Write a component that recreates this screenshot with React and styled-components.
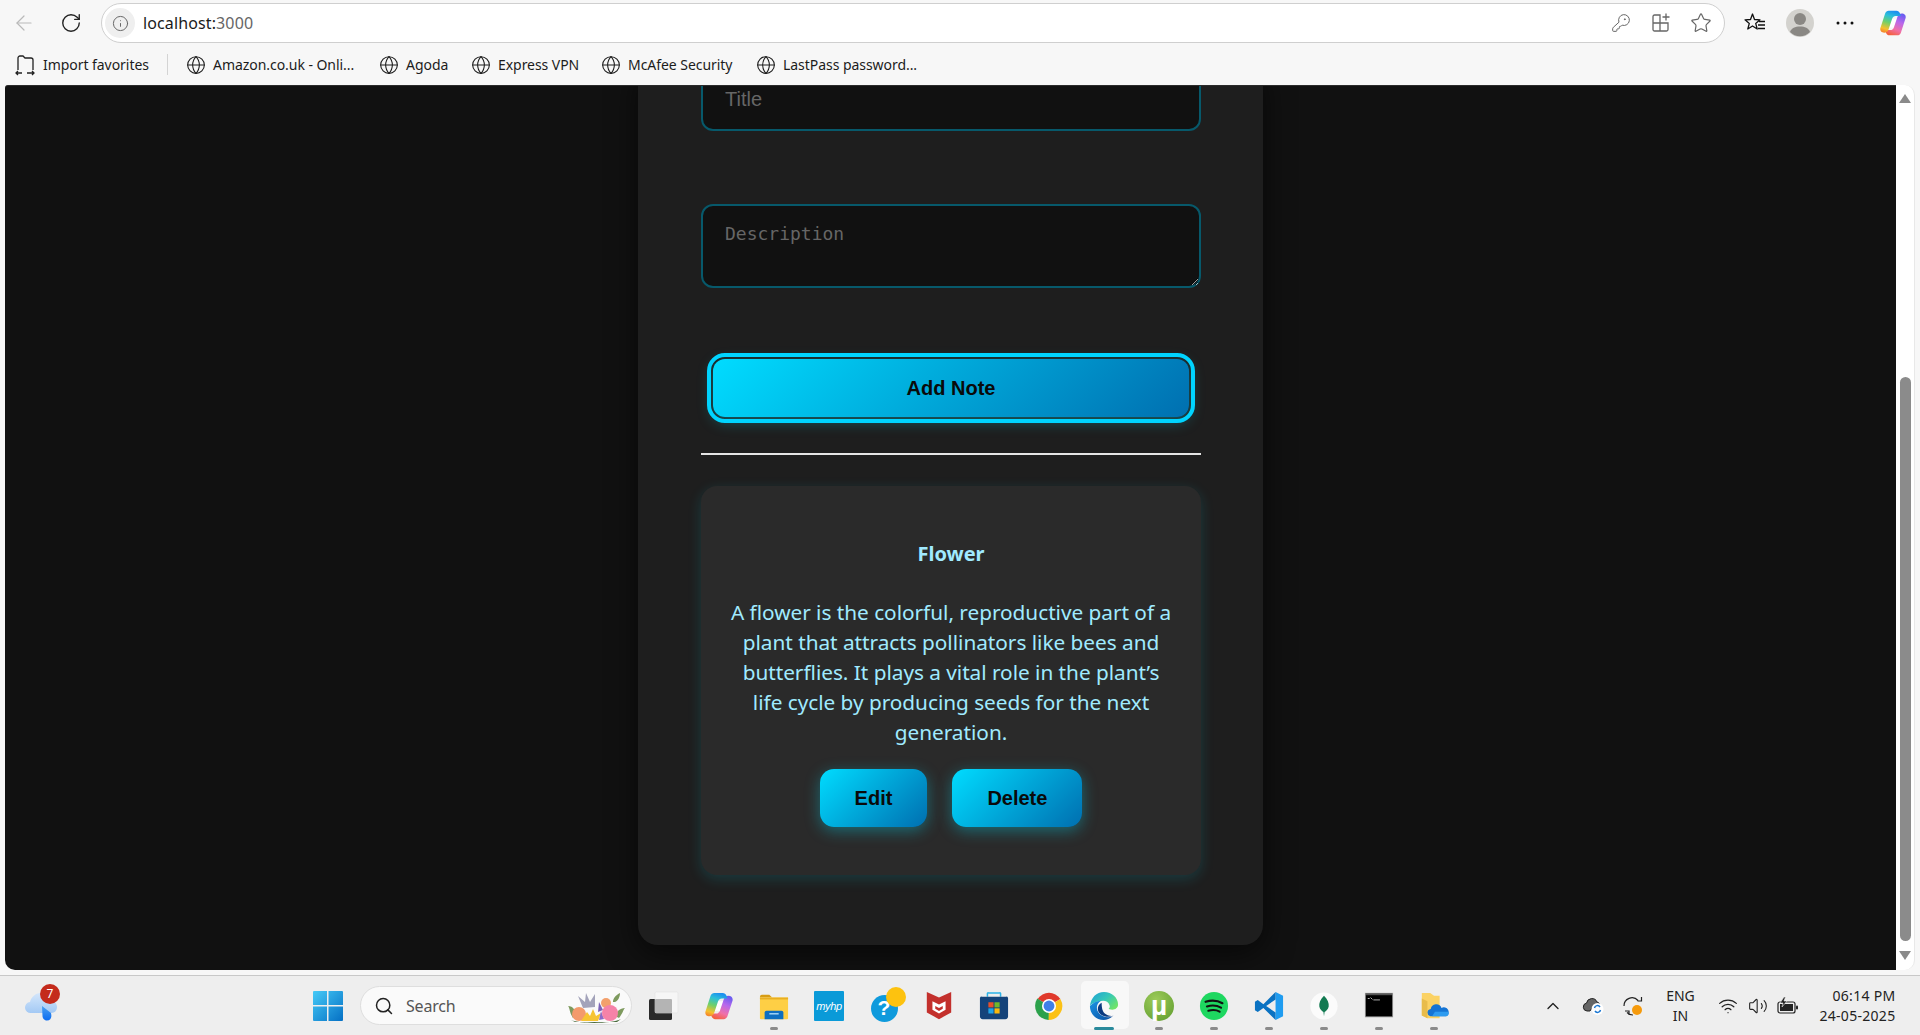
import styled, { createGlobalStyle } from 'styled-components';
import { ArrowLeft, RotateCw, KeyRound, Star, Globe, Search, ChevronUp, Wifi, Volume2, Info } from 'lucide-react';

const Global = createGlobalStyle`
  html, body { margin: 0; padding: 0; height: 100%; overflow: hidden; }
  body { font-family: 'Noto Sans', 'Open Sans', sans-serif; background: #f7f7f7; }
  * { box-sizing: border-box; }
`;

const Window = styled.div`
  width: 1920px;
  height: 1035px;
  display: flex;
  flex-direction: column;
  background: #f7f7f7;
`;

/* browser chrome */
const Toolbar = styled.div`
  height: 44px;
  padding-top: 3px;
  display: flex;
  align-items: flex-start;
`;
const NavBtn = styled.div`
  width: ${p => p.$w || 46}px;
  height: 40px;
  margin-left: ${p => p.$ml || 0}px;
  display: flex;
  align-items: center;
  justify-content: center;
  flex-shrink: 0;
  color: ${p => p.$color || '#222'};
`;
const AddressBar = styled.div`
  width: 1624px;
  height: 40px;
  margin-left: 8px;
  flex-shrink: 0;
  background: #fff;
  border: 1px solid #cfcfcf;
  border-radius: 20px;
  display: flex;
  align-items: center;
  padding: 0 3px 0 3px;
`;
const SiteInfo = styled.div`
  width: 30px;
  height: 30px;
  border-radius: 50%;
  background: #efefef;
  display: flex;
  align-items: center;
  justify-content: center;
  color: #666;
`;
const Url = styled.div`
  margin-left: 8px;
  font-size: 16px;
  letter-spacing: 0.12px;
  color: #1a1a1a;
  flex: 1;
  span { color: #666; }
`;
const AddressIcon = styled.div`
  width: 40px;
  display: flex;
  justify-content: center;
  color: #666;
`;
const Bookmarks = styled.div`
  height: 41px;
  display: flex;
  align-items: center;
  padding: 0 0 0 14px;
  font-size: 14px;
  letter-spacing: -0.05px;
  color: #1c1c1c;
`;
const Bookmark = styled.div`
  display: flex;
  align-items: center;
  gap: 7px;
  width: ${p => p.$w}px;
  flex-shrink: 0;
  white-space: nowrap;
`;
const BarSep = styled.div`
  width: 1px;
  height: 21px;
  background: #d4d4d4;
  margin-right: 18px;
`;

/* page viewport */
const Middle = styled.div`
  height: 885px;
  margin: 0 5px 5px;
  display: flex;
`;
const Viewport = styled.div`
  flex: 1;
  background: #111;
  border-radius: 3px 0 0 10px;
  border-top: 1px solid #2b2b2b;
  overflow: hidden;
`;
const Scrollbar = styled.div`
  width: 19px;
  background: #fff;
  border-radius: 0 10px 10px 0;
  border-right: 1px solid #e8e8e8;
  display: flex;
  flex-direction: column;
  align-items: center;
  padding: 9px 0 9px;
`;
const ScrollArrow = styled.div`
  width: 0;
  height: 0;
  border-left: 6px solid transparent;
  border-right: 6px solid transparent;
  ${p => (p.$down ? 'border-top: 9px solid #8a8a8a;' : 'border-bottom: 9px solid #8a8a8a;')}
`;
const ScrollThumb = styled.div`
  width: 11px;
  height: 564px;
  background: #8b8b8b;
  border-radius: 6px;
  margin: 274px 0 10px;
`;

const Panel = styled.div`
  width: 625px;
  margin: -17px auto 0;
  padding: 0 62px 70px 63px;
  background: #1e1e1e;
  border-radius: 0 0 20px 20px;
  box-shadow: 0 8px 30px rgba(0, 0, 0, 0.6);
`;
const Form = styled.form`
  display: flex;
  flex-direction: column;
  gap: 73px;
  padding-bottom: 36px;
  border-bottom: 2px solid #e4e4e4;
`;
const fieldStyles = `
  width: 100%;
  background: #111;
  border: 2px solid #07596b;
  border-radius: 12px;
  padding: 0 22px;
  color: #fff;
  outline: none;
  display: block;
  &::placeholder { color: #666; opacity: 1; }
`;
const TitleInput = styled.input`
  ${fieldStyles}
  height: 62px;
  padding-bottom: 2px;
  font: 20px 'Liberation Sans', Arial, sans-serif;
`;
const DescInput = styled.textarea`
  ${fieldStyles}
  height: 84px;
  padding-top: 18px;
  font: 18px/20px 'DejaVu Sans Mono', monospace;
`;
const GlowButton = styled.button`
  border: 0;
  background: linear-gradient(135deg, #00dcff, #006fb0);
  color: #0a0a0a;
  font: bold 20px 'Liberation Sans', Arial, sans-serif;
  box-shadow: 0 4px 15px rgba(0, 229, 255, 0.35);
`;
const AddButton = styled(GlowButton)`
  height: 58px;
  margin: -2px 12px 0;
  border-radius: 12px;
  outline: 4px solid #00d4ff;
  outline-offset: 2px;
`;
const Card = styled.div`
  margin-top: 31px;
  padding: 54px 27px 48px;
  background: #2a2a2a;
  border-radius: 16px;
  text-align: center;
  color: #a0eaff;
  box-shadow: 0 4px 14px rgba(0, 229, 255, 0.15);
`;
const CardTitle = styled.h3`
  margin: 0 0 30px;
  font-size: 20px;
  line-height: 27px;
  font-weight: 700;
`;
const CardText = styled.p`
  margin: 0 0 22px;
  font-size: 20.8px;
  line-height: 30px;
  letter-spacing: -0.03px;
`;
const CardActions = styled.div`
  display: flex;
  justify-content: center;
  gap: 25px;
`;
const SmallButton = styled(GlowButton)`
  height: 58px;
  padding: 0 35px;
  border-radius: 14px;
`;

/* taskbar */
const Taskbar = styled.div`
  height: 60px;
  background: #eeeeee;
  border-top: 1px solid #c8c8c8;
  display: flex;
  align-items: center;
  & > * { flex-shrink: 0; }
`;
const Weather = styled.div`
  position: relative;
  width: 46px;
  margin-left: 18px;
  height: 40px;
  display: flex;
  align-items: center;
  justify-content: center;
`;
const CountBadge = styled.div`
  position: absolute;
  top: -2px;
  left: 22px;
  width: 20px;
  height: 20px;
  border-radius: 50%;
  background: #c42b1c;
  color: #fff;
  font-size: 12px;
  display: flex;
  align-items: center;
  justify-content: center;
`;
const StartBtn = styled.div`
  margin-left: 249px;
  width: 30px;
  display: flex;
`;
const SearchBox = styled.div`
  margin-left: 17px;
  width: 272px;
  height: 39px;
  background: #fafafa;
  border: 1px solid #dedede;
  border-radius: 20px;
  display: flex;
  align-items: center;
  padding: 0 4px 0 13px;
  gap: 12px;
  font-size: 16px;
  letter-spacing: -0.2px;
  color: #555;
`;
const SearchLabel = styled.span`
  flex: 1;
`;
const AppStrip = styled.div`
  margin-left: 4.5px;
  display: flex;
`;
const AppCell = styled.div`
  position: relative;
  width: 55px;
  height: 59px;
  display: flex;
  align-items: center;
  justify-content: center;
`;
const ActiveBg = styled.div`
  position: absolute;
  top: 5px;
  left: 4px;
  width: 48px;
  height: 48px;
  background: #f8f8f8;
  border-radius: 5px;
`;
const RunDot = styled.div`
  position: absolute;
  bottom: 5px;
  left: 50%;
  transform: translateX(-50%);
  width: ${p => (p.$active ? 20 : 8)}px;
  height: 3px;
  border-radius: 2px;
  background: ${p => (p.$active ? '#2a8a9c' : '#8a8a8a')};
`;
const AppIcon = styled.div`
  position: relative;
  display: flex;
`;
const Tray = styled.div`
  margin-left: 71px;
  display: flex;
  align-items: center;
  color: #222;
`;
const TrayItem = styled.div`
  width: ${p => p.$w || 40}px;
  margin-left: ${p => p.$ml || 0}px;
  display: flex;
  justify-content: center;
  flex-shrink: 0;
`;
const TwoLine = styled.div`
  font-size: 14px;
  line-height: 20px;
  text-align: ${p => p.$align || 'center'};
  width: ${p => p.$w}px;
  margin-left: ${p => p.$ml || 0}px;
  color: #222;
  white-space: nowrap;
  letter-spacing: ${p => p.$ls || 0}px;
`;

/* drawn icons */
const S = ({ size = 30, children, vb = 32 }) => (
  <svg width={size} height={size} viewBox={`0 0 ${vb} ${vb}`} fill="none">{children}</svg>
);

const ExtIcon = () => (
  <svg width="22" height="22" viewBox="0 0 22 22" fill="none" stroke="#666" strokeWidth="1.3">
    <path d="M3 4.500A1.500 1.500 0 0 1 4.500 3H10v8H3zM3 11h7v8H4.500A1.500 1.500 0 0 1 3 17.500zM10 11h8v6.500a1.500 1.500 0 0 1-1.500 1.500H10z" />
    <path d="M16 1.500v7M12.500 5h7" />
  </svg>
);
const FavList = () => (
  <svg width="24" height="24" viewBox="0 0 24 24" fill="none" stroke="#111" strokeWidth="1.300" strokeLinejoin="round">
    <path d="M9.500 3l2 5.500 5.500.3-4.300 3.600 1.500 5.600-4.700-3-4.700 3 1.500-5.600L2 8.800l5.500-.3z" />
    <path d="M16 10.500h6M15 14h7M15 17.500h7" />
  </svg>
);
const Avatar = () => (
  <svg width="28" height="28" viewBox="0 0 28 28">
    <circle cx="14" cy="14" r="14" fill="#d3d2ce" />
    <circle cx="14" cy="10" r="6" fill="#8a8884" />
    <path d="M4 23c1.500-4 5-5.500 10-5.500S22.500 19 24 23a14 14 0 0 1-20 0z" fill="#8a8884" />
  </svg>
);
const Dots = () => (
  <svg width="18" height="4" viewBox="0 0 18 4" fill="#111">
    <circle cx="2" cy="2" r="1.500" /><circle cx="9" cy="2" r="1.500" /><circle cx="16" cy="2" r="1.500" />
  </svg>
);
const Copilot = ({ id, size = 30 }) => (
  <S size={size}>
    <defs>
      <linearGradient id={id + 'a'} x1="0.6" y1="0" x2="0.3" y2="1">
        <stop offset="0" stopColor="#1c8ff0" /><stop offset=".25" stopColor="#2bc0d8" /><stop offset=".55" stopColor="#6fd06a" /><stop offset=".85" stopColor="#f6c02c" /><stop offset="1" stopColor="#f58a2c" />
      </linearGradient>
      <linearGradient id={id + 'b'} x1="0.7" y1="0" x2="0.3" y2="1">
        <stop offset="0" stopColor="#6a5cf0" /><stop offset=".35" stopColor="#b868ec" /><stop offset=".7" stopColor="#f070a8" /><stop offset="1" stopColor="#f4603c" />
      </linearGradient>
    </defs>
    <path d="M15 11H21L17 21H11Z" fill="#fff" />
    <path d="M21 30H12C10 30 9 29 8 27L7 24H13C15 24 16 23 17 21L21 9C22 6 24 5 26 5C29 5 31 7 30.500 10L25 27C24 29 23 30 21 30Z" fill={`url(#${id}b)`} />
    <path d="M11 2H20C22 2 23 3 24 5L25 8H19C17 8 16 9 15 11L11 23C10 26 8 27 6 27C3 27 1 25 1.500 22L7 5C8 3 9 2 11 2Z" fill={`url(#${id}a)`} />
  </S>
);
const ImportFav = () => (
  <svg width="22" height="22" viewBox="0 0 22 22" fill="none" stroke="#222" strokeWidth="1.300">
    <path d="M4 16V4a2 2 0 0 1 2-2h3l2 2h6a2 2 0 0 1 2 2v10" />
    <path d="M8 19H2M4 17l-2 2 2 2M13 19h7M18 17l2 2-2 2" />
  </svg>
);
const Battery = () => (
  <svg width="22" height="18" viewBox="0 0 22 18" fill="none">
    <rect x="1" y="5" width="17" height="11" rx="2" stroke="#222" strokeWidth="1.200" />
    <rect x="3" y="7" width="13" height="7" fill="#222" />
    <rect x="19" y="8.500" width="2" height="4" rx="1" fill="#222" />
    <path d="M7 0L3 6h3l-1 4 5-6H7l1.500-4z" fill="#222" stroke="#eee" strokeWidth=".6" />
  </svg>
);
const CloudSync = () => (
  <svg width="22" height="20" viewBox="0 0 22 20" fill="none">
    <path d="M5 15a4 4 0 0 1-.5-7.900A5.500 5.500 0 0 1 15 6a4 4 0 0 1 3 3H12l-4 6z" fill="#666" stroke="#222" strokeWidth="1" />
    <circle cx="15.500" cy="13" r="6" fill="#fff" />
    <path d="M12.500 12a3 3 0 0 1 5.500-1M18.500 14a3 3 0 0 1-5.500 1" stroke="#1976d2" strokeWidth="1.500" />
  </svg>
);
const SyncDot = () => (
  <svg width="22" height="22" viewBox="0 0 22 22" fill="none" stroke="#222" strokeWidth="1.200">
    <path d="M2 11a8 8 0 0 1 14-5.500M19.500 2v4h-4M3 16h4v4M5 17.500a8 8 0 0 0 6 2.500" />
    <circle cx="15" cy="15" r="5" fill="#f59a0c" stroke="none" />
  </svg>
);
const StartLogo = () => (
  <svg width="30" height="30" viewBox="0 0 30 30">
    <defs>
      <linearGradient id="win" x1="0" y1="0" x2="1" y2="1">
        <stop offset="0" stopColor="#45caf7" /><stop offset="1" stopColor="#0570c4" />
      </linearGradient>
    </defs>
    <path d="M0 1a1 1 0 0 1 1-1h13v14H0zM15.500 0H29a1 1 0 0 1 1 1v13H15.500zM0 15.500h14V30H1a1 1 0 0 1-1-1zM15.500 15.500H30V29a1 1 0 0 1-1 1H15.500z" fill="url(#win)" />
  </svg>
);
const Bouquet = () => (
  <svg width="62" height="36" viewBox="0 0 62 36">
    <path d="M8 30C4 24 5 20 3 18c5 0 8 5 10 10zM54 30c4-5 4-8 6-10-5 0-9 4-10 8zM50 14c3-1 5-5 5-9-4 2-7 5-7 9z" fill="#7e9a5e" />
    <path d="M18 20l-5-12 7 6 1-9 4 9 5-8 0 13z" fill="#a3a3ba" />
    <path d="M33 24l1-10 4 8z" fill="#7a62b8" />
    <circle cx="14" cy="26" r="7" fill="#f39a6c" />
    <circle cx="41" cy="15" r="5" fill="#f3a06c" />
    <path d="M16 33l6-9 3 4 3-7 3 7 5-3-3 8z" fill="#f6c433" />
    <path d="M34 32l2-9 3 8z" fill="#8b6cc9" />
    <circle cx="45" cy="25" r="8" fill="#f582a8" />
    <path d="M6 32c10 4 40 4 50-1l-4 3H10z" fill="#4a6a3c" />
  </svg>
);
const WeatherIcon = () => (
  <svg width="34" height="36" viewBox="0 0 34 36">
    <defs>
      <linearGradient id="cloud" x1="0" y1="0" x2="0" y2="1">
        <stop offset="0" stopColor="#d4e6fb" /><stop offset="1" stopColor="#a3c9f4" />
      </linearGradient>
      <linearGradient id="drop" x1="0" y1="0" x2="0" y2="1">
        <stop offset="0" stopColor="#4aa0f0" /><stop offset="1" stopColor="#0c6cf2" />
      </linearGradient>
    </defs>
    <path d="M7 25a5.500 5.500 0 0 1-1-11C7 9 12 5 16 5c5 0 8 3 9 7C29.500 12 33 15 33 19c0 3-2 6-6 6z" fill="url(#cloud)" />
    <path d="M18 18L27 25C28 29 27 32.500 23 32.500C20 32.500 18.500 30 18.500 28z" fill="url(#drop)" />
  </svg>
);
const TaskView = () => (
  <svg width="30" height="30" viewBox="0 0 30 30">
    <rect x="0" y="8" width="23" height="21" rx="1.500" fill="#2a2a2a" />
    <rect x="6" y="1" width="23" height="21" rx="1.500" fill="#f6f6f6" stroke="#e2e2e2" strokeWidth=".6" />
    <rect x="6" y="8" width="17" height="14" rx="1" fill="#b4b4b4" />
  </svg>
);
const FolderIcon = () => (
  <S>
    <path d="M1 6a2 2 0 0 1 2-2h8l3 3h-13z" fill="#d79c14" />
    <path d="M1 7h30v22a1 1 0 0 1-1 1H2a1 1 0 0 1-1-1z" fill="#fecf45" />
    <path d="M1 7h30v2H1z" fill="#e9ae22" />
    <path d="M6 23a2 2 0 0 1 2-2h16a2 2 0 0 1 2 2v7H6z" fill="#0e6fc0" />
    <rect x="11" y="23.500" width="10" height="1.600" fill="#9fd2f4" />
  </S>
);
const MyHp = styled.div`
  width: 30px;
  height: 30px;
  background: #0a9ad8;
  border-radius: 1px;
  color: #fff;
  font: italic 11px 'Liberation Sans', sans-serif;
  letter-spacing: -0.4px;
  display: flex;
  align-items: center;
  justify-content: center;
`;
const Help = styled.div`
  position: relative;
  width: 27px;
  height: 27px;
  margin-top: 5px;
  background: #0e9adc;
  border-radius: 50%;
  color: #fff;
  font: bold 21px 'Liberation Sans', sans-serif;
  display: flex;
  align-items: center;
  justify-content: center;
`;
const HelpDot = styled.div`
  position: absolute;
  top: -8px;
  left: 15px;
  width: 20px;
  height: 20px;
  background: #fdc20f;
  border-radius: 50%;
`;
const McAfee = () => (
  <S>
    <path d="M3 1l13 6 13-6v22l-13 7-13-7z" fill="#c3302c" />
    <path d="M9 11l7 3.500 7-3.500v9l-7 4-7-4z" fill="#fff" />
    <path d="M12 16l4 2 4-2v3l-4 2.200-4-2.200z" fill="#c3302c" />
  </S>
);
const StoreIcon = () => (
  <S>
    <path d="M9 6V2.500A1 1 0 0 1 10 2h12a1 1 0 0 1 1 .5V6" stroke="#2bb3e8" strokeWidth="1.600" />
    <path d="M1 7.500A2 2 0 0 1 3 6h26a2 2 0 0 1 2 1.500V27a3 3 0 0 1-3 3H4a3 3 0 0 1-3-3z" fill="#14437a" />
    <rect x="10" y="12" width="5.500" height="5.500" fill="#e8502a" />
    <rect x="16.500" y="12" width="5.500" height="5.500" fill="#72b72a" />
    <rect x="10" y="18.500" width="5.500" height="5.500" fill="#1fa4e8" />
    <rect x="16.500" y="18.500" width="5.500" height="5.500" fill="#fbb90c" />
  </S>
);
const Chrome = () => (
  <S>
    <path d="M16 16L3.880 9A14.500 14.500 0 0 1 28.120 9Z" fill="#e0392b" transform="translate(0 -.500)" />
    <path d="M16 16L28.120 8.500A15 15 0 0 1 15 31Z" fill="#fbc116" />
    <path d="M16 16L15.500 31A15 15 0 0 1 3.500 8Z" fill="#2ba14b" />
    <circle cx="16" cy="16" r="7.500" fill="#fff" />
    <circle cx="16" cy="16" r="5.800" fill="#3f7fe8" />
  </S>
);
const Edge = () => (
  <S>
    <defs>
      <linearGradient id="edgeTop" x1="0" y1="0" x2="1" y2=".7">
        <stop offset="0" stopColor="#1e9ed8" /><stop offset=".55" stopColor="#35c8b8" /><stop offset="1" stopColor="#6fe36a" />
      </linearGradient>
      <linearGradient id="edgeLow" x1="0" y1="0" x2=".8" y2="1">
        <stop offset="0" stopColor="#1a94e4" /><stop offset="1" stopColor="#0d56a8" />
      </linearGradient>
    </defs>
    <path d="M1 16C2 7 8 1 16 1c8.500 0 15 6 15 13.500 0 3.500-3 5.500-6 5.500-2.500 0-4-1-4-1 1-1 1.500-2 1-3.500-1-3.500-4-5-7-5-6 0-12 3-14 5.500z" fill="url(#edgeTop)" />
    <path d="M1 16c3-3 7-5.500 12-5.500-3.500 2-5 5-4.500 8.500.6 5 6 9 12 9 3 0 5-1 5-1-3 2.500-6.500 4-10 4C7.500 31 1 24.500 1 16z" fill="url(#edgeLow)" />
    <path d="M13.500 12.500c-3 1.500-4.500 4.500-4 7.500.8 5 6 7.500 11 7.500 3 0 5.500-1 5.500-1-3 .3-9-.8-11-5-1.500-3-1.500-7-1.500-9z" fill="#0b3a80" />
  </S>
);
const UTorrent = styled.div`
  width: 30px;
  height: 30px;
  border-radius: 50%;
  background: radial-gradient(circle at 40% 30%, #9dcb5a, #5d9a2c);
  color: #fff;
  font: bold 28px 'Liberation Sans', sans-serif;
  display: flex;
  align-items: center;
  justify-content: center;
`;
const Spotify = () => (
  <S>
    <circle cx="16" cy="16" r="15" fill="#1ed760" />
    <path d="M7 11.500c6-1.800 13-1.300 18 1.500M8.500 16.500c5-1.500 11-1 15 1.300M10 21c4-1 9-.7 12 1" stroke="#111" strokeWidth="2.300" strokeLinecap="round" />
  </S>
);
const VsCode = () => (
  <S>
    <path d="M23 1l8 4v22l-8 4z" fill="#1f9cf0" />
    <path d="M23 1L10 14 4 9.500 1 11.500v9L4 22.500 10 18l13 13v-8L13 16l10-7z" fill="#0a72c2" />
  </S>
);
const Mongo = () => (
  <S>
    <circle cx="16" cy="16" r="14.500" fill="#fbfbfb" />
    <path d="M16 5c4 4 5.500 8 5 11.500-.5 3-3 5-4.400 6L16 27l-.6-4.500c-1.400-1-3.900-3-4.400-6C10.500 13 12 9 16 5z" fill="#137a52" />
  </S>
);
const Cmd = () => (
  <S>
    <rect x="1" y="2" width="30" height="26" fill="#8f8f8f" />
    <rect x="2" y="4" width="28" height="23" fill="#000" />
    <rect x="2" y="2.500" width="28" height="2" fill="#555" />
    <path d="M4 8h2M7 7l2 2M10 9.500h7" stroke="#bbb" strokeWidth="1" />
  </S>
);
const OneFolder = () => (
  <S>
    <path d="M3 2h9l4 3h6v24H9l-6-3z" fill="#fbd264" />
    <path d="M9 29l-6-3V8l6 3z" fill="#e8bc4b" />
    <path d="M12 27a4 4 0 0 1 .5-7.800A6 6 0 0 1 24 18a4.500 4.500 0 0 1 5 9z" fill="#1474d4" />
    <path d="M17 22h14a3 3 0 0 1-2 5H14z" fill="#2d9bf0" />
  </S>
);

const links = [
  ['Amazon.co.uk - Onli...', 193],
  ['Agoda', 92],
  ['Express VPN', 130],
  ['McAfee Security', 155],
  ['LastPass password...', 170],
];

const apps = [
  { key: 'task', icon: <TaskView /> },
  { key: 'copilot', icon: <Copilot id="tb" /> },
  { key: 'folder', icon: <FolderIcon />, dot: true },
  { key: 'hp', icon: <MyHp>myhp</MyHp> },
  { key: 'help', icon: <Help>?<HelpDot /></Help> },
  { key: 'mcafee', icon: <McAfee /> },
  { key: 'store', icon: <StoreIcon /> },
  { key: 'chrome', icon: <Chrome /> },
  { key: 'edge', icon: <Edge />, active: true },
  { key: 'ut', icon: <UTorrent>µ</UTorrent>, dot: true },
  { key: 'spotify', icon: <Spotify />, dot: true },
  { key: 'vscode', icon: <VsCode />, dot: true },
  { key: 'mongo', icon: <Mongo />, dot: true },
  { key: 'cmd', icon: <Cmd />, dot: true },
  { key: 'onedrive', icon: <OneFolder />, dot: true },
];

export default function App() {
  return (
    <Window>
      <Global />
      <Toolbar>
        <NavBtn $w={48} $color="#b9b9b9"><ArrowLeft size={24} strokeWidth={1.2} /></NavBtn>
        <NavBtn $w={45}><RotateCw size={22} strokeWidth={1.5} /></NavBtn>
        <AddressBar>
          <SiteInfo><Info size={17} strokeWidth={1.4} /></SiteInfo>
          <Url>localhost:<span>3000</span></Url>
          <AddressIcon><KeyRound size={20} strokeWidth={1.2} /></AddressIcon>
          <AddressIcon><ExtIcon /></AddressIcon>
          <AddressIcon><Star size={22} strokeWidth={1.3} /></AddressIcon>
        </AddressBar>
        <NavBtn $w={44} $ml={8}><FavList /></NavBtn>
        <NavBtn $w={46}><Avatar /></NavBtn>
        <NavBtn $w={44}><Dots /></NavBtn>
        <NavBtn $w={52}><Copilot id="bar" size={28} /></NavBtn>
      </Toolbar>
      <Bookmarks>
        <Bookmark $w={153}><ImportFav />Import favorites</Bookmark>
        <BarSep />
        {links.map(([label, w]) => (
          <Bookmark key={label} $w={w}><Globe size={20} strokeWidth={1.3} />{label}</Bookmark>
        ))}
      </Bookmarks>

      <Middle>
        <Viewport>
          <Panel>
            <Form onSubmit={e => e.preventDefault()}>
              <TitleInput placeholder="Title" />
              <DescInput placeholder="Description" />
              <AddButton type="submit">Add Note</AddButton>
            </Form>
            <Card>
              <CardTitle>Flower</CardTitle>
              <CardText>
                A flower is the colorful, reproductive part of a plant that attracts pollinators like bees and butterflies. It plays a vital role in the plant’s life cycle by producing seeds for the next generation.
              </CardText>
              <CardActions>
                <SmallButton>Edit</SmallButton>
                <SmallButton>Delete</SmallButton>
              </CardActions>
            </Card>
          </Panel>
        </Viewport>
        <Scrollbar>
          <ScrollArrow />
          <ScrollThumb />
          <ScrollArrow $down />
        </Scrollbar>
      </Middle>

      <Taskbar>
        <Weather>
          <WeatherIcon />
          <CountBadge>7</CountBadge>
        </Weather>
        <StartBtn><StartLogo /></StartBtn>
        <SearchBox>
          <Search size={20} strokeWidth={1.8} color="#222" />
          <SearchLabel>Search</SearchLabel>
          <Bouquet />
        </SearchBox>
        <AppStrip>
          {apps.map(a => (
            <AppCell key={a.key}>
              {a.active && <ActiveBg />}
              <AppIcon>{a.icon}</AppIcon>
              {(a.dot || a.active) && <RunDot $active={a.active} />}
            </AppCell>
          ))}
        </AppStrip>
        <Tray>
          <TrayItem><ChevronUp size={20} strokeWidth={1.6} /></TrayItem>
          <TrayItem><CloudSync /></TrayItem>
          <TrayItem><SyncDot /></TrayItem>
          <TwoLine $w={50} $ml={3}>ENG<br />IN</TwoLine>
          <TrayItem $w={30} $ml={7}><Wifi size={20} strokeWidth={1.5} /></TrayItem>
          <TrayItem $w={30}><Volume2 size={20} strokeWidth={1.3} /></TrayItem>
          <TrayItem $w={30}><Battery /></TrayItem>
          <TwoLine $w={80} $ml={13} $align="right" $ls={0.3}>06:14 PM<br />24-05-2025</TwoLine>
        </Tray>
      </Taskbar>
    </Window>
  );
}
